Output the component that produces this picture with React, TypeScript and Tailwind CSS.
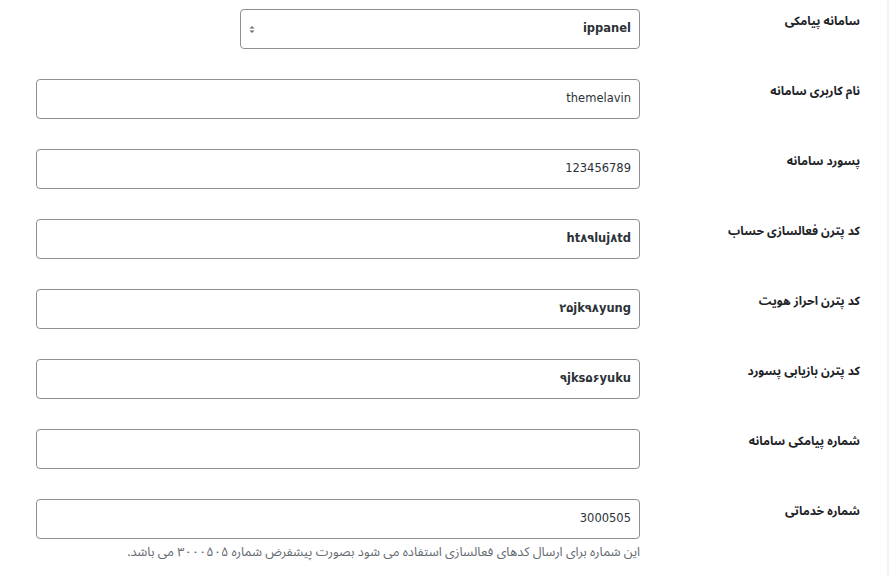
import { ReactNode } from "react";

const rows: { label: string; value: string; bold?: boolean }[] = [
  { label: "نام کاربری سامانه", value: "themelavin" },
  { label: "پسورد سامانه", value: "123456789" },
  { label: "کد پترن فعالسازی حساب", value: "ht۸۹luj۸td", bold: true },
  { label: "کد پترن احراز هویت", value: "۲۵jk۹۸yung", bold: true },
  { label: "کد پترن بازیابی پسورد", value: "۹jks۵۶yuku", bold: true },
  { label: "شماره پیامکی سامانه", value: "" },
  { label: "شماره خدماتی", value: "3000505" },
];

const fa = '"Noto Sans Arabic", "Noto Naskh Arabic", "DejaVu Sans", Tahoma, sans-serif';

function Row({ label, children }: { label: string; children: ReactNode }) {
  return (
    <div className="flex items-start pt-[9px] pb-[21px]">
      <div
        className="w-[200px] shrink-0 pt-[2px] text-[12px] font-bold leading-[22px] text-[#1d2327]"
        style={{ fontFamily: fa }}
      >
        {label}
      </div>
      <div className="mr-[20px] w-[604px]">{children}</div>
    </div>
  );
}

export default function App() {
  return (
    <div
      dir="rtl"
      className="relative h-[576px] w-[890px] overflow-hidden bg-white pr-[30px]"
      style={{ fontFamily: '"DejaVu Sans", Tahoma, sans-serif' }}
    >
      <div className="absolute left-[887px] top-0 h-full w-[2px] bg-[#f3f3f3]" />
      <div className="flex items-start pt-[9px] pb-[21px]">
        <div
          className="w-[200px] shrink-0 pt-[2px] text-[12px] font-bold leading-[22px] text-[#1d2327]"
          style={{ fontFamily: fa }}
        >
          سامانه پیامکی
        </div>
        <div className="mr-[20px] flex h-[40px] w-[400px] items-center justify-between rounded-[4px] border border-[#8c8f94] bg-white px-[8px] text-[11.5px] font-semibold text-[#2c3338]">
          <span>ippanel</span>
          <svg width="6" height="9" viewBox="0 0 6 9" className="text-[#6b6b6b]">
            <path d="M0.5 3.5L3 1L5.5 3.5Z M0.5 5.5L3 8L5.5 5.5Z" fill="currentColor" />
          </svg>
        </div>
      </div>
      {rows.map((r) => (
        <Row key={r.label} label={r.label}>
          <div
            className={
              "flex h-[40px] items-center rounded-[4px] border border-[#8c8f94] bg-white px-[8px] text-[11.5px] text-[#2c3338] " +
              (r.bold ? "font-semibold" : "")
            }
          >
            <span dir="ltr">{r.value}</span>
          </div>
          {r.label === "شماره خدماتی" && (
            <p className="mt-[4px] text-[12.75px] leading-[18px] text-[#646970]" style={{ fontFamily: fa }}>
              این شماره برای ارسال کدهای فعالسازی استفاده می شود بصورت پیشفرض شماره ۳۰۰۰۵۰۵ می باشد.
            </p>
          )}
        </Row>
      ))}
    </div>
  );
}
